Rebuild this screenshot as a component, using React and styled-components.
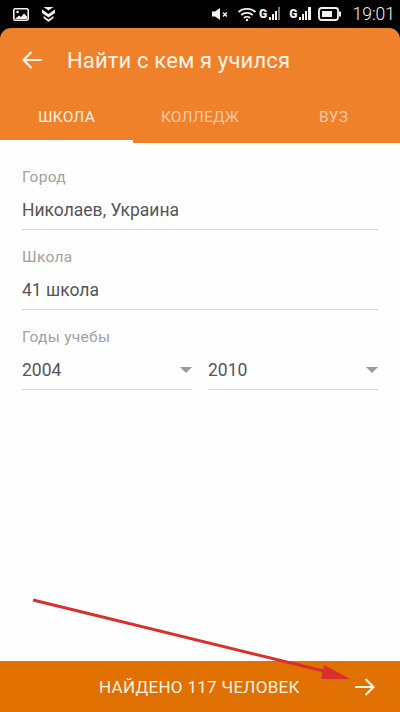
import React from "react";
import styled, { createGlobalStyle } from "styled-components";

const Global = createGlobalStyle`
  html, body { margin: 0; padding: 0; background: #000; }
  * { box-sizing: border-box; }
`;
const Screen = styled.div`
  position: relative; width: 400px; height: 712px; display: flex; flex-direction: column;
  background: #000; font-family: Roboto, "Noto Sans", sans-serif; overflow: hidden;
`;
const StatusBar = styled.div`
  height: 28px; flex: none; display: flex; align-items: center; padding: 0 5px 0 13px; color: #f2f2f2; background: #000;
`;
const StatusLeft = styled.div`display: flex; align-items: center; gap: 13px; flex: 1;`;
const StatusRight = styled.div`display: flex; align-items: center; gap: 2px;`;
const Clock = styled.span`font-size: 17.5px; font-weight: 300; margin-left: 9px; line-height: 28px;`;
const Signal = styled.span`display: inline-flex; align-items: flex-end; gap: 1px; height: 16px; margin-top: -3px; margin-left: ${p => p.$gap || 0}px;`;
const SignalG = styled.span`font-size: 12px; font-weight: 900; line-height: 13px; margin-right: 1px;`;
const Bar = styled.span`width: ${p => p.$w || 2}px; height: ${p => p.$h}px; background: ${p => p.$dim ? "#777" : "#f2f2f2"}; margin-bottom: 1px;`;
const Header = styled.header`
  flex: none; height: 115px; background: #f0812b; border-radius: 11px 11px 0 0; display: flex; flex-direction: column; color: #fff3e6;
`;
const TitleRow = styled.div`height: 66px; display: flex; align-items: center; padding: 0 0 2px 22px; gap: 25px;`;
const Title = styled.h1`margin: 0; font-size: 22px; font-weight: 400; letter-spacing: .15px; color: #fff3e6;`;
const Tabs = styled.div`display: grid; grid-template-columns: 133px 134px 133px; flex: 1;`;
const Tab = styled.div`
  display: flex; align-items: center; justify-content: center; font-size: 15.5px; letter-spacing: .2px;
  color: ${p => p.$active ? "#fff0df" : "#f9c9a0"};
  border-bottom: 3px solid ${p => p.$active ? "#ffffff" : "transparent"};
`;
const Form = styled.main`
  flex: 1; background: #fefefe; padding: 20px 22px 0; display: flex; flex-direction: column; gap: 13px;
`;
const Field = styled.div`display: flex; flex-direction: column;`;
const Label = styled.label`font-size: 15.5px; line-height: 28px; height: 28px; color: #a0a0a0; letter-spacing: .3px;`;
const Value = styled.div`
  position: relative; height: 39px; padding-top: 4px; font-size: 17.5px; line-height: 30px; color: #555;
  border-bottom: 1px solid #dcdcdc;
`;
const Row = styled.div`display: grid; grid-template-columns: 170px 170px; gap: 16px;`;
const Caret = styled.span`
  position: absolute; right: 0; top: 16px; width: 0; height: 0;
  border-left: 6px solid transparent; border-right: 6px solid transparent; border-top: 6px solid #9a9a9a;
`;
const Footer = styled.footer`
  flex: none; height: 51px; background: #e07000; display: flex; align-items: center; color: #fff3e6; padding: 0 25px 0 99px;
`;
const FooterText = styled.span`flex: 1; font-size: 17px; letter-spacing: .3px;`;
const Annotation = styled.svg`position: absolute; left: 0; top: 0; pointer-events: none;`;

const Arrow = ({ flip }) => (
  <svg width="20" height="18" viewBox="0 0 20 18" fill="none" stroke="#fff3e6" strokeWidth="2.2" style={flip ? { transform: "scaleX(-1)" } : undefined}>
    <path d="M0 9H18.500M10.500 1l8 8-8 8" />
  </svg>
);

export default function App() {
  return (
    <Screen>
      <Global />
      <StatusBar>
        <StatusLeft>
          <svg width="16" height="13" viewBox="0 0 16 13">
            <rect x=".8" y=".8" width="14.400" height="11.400" rx="1.500" fill="none" stroke="#f2f2f2" strokeWidth="1.600" />
            <circle cx="4.600" cy="4" r="1.300" fill="#f2f2f2" />
            <path d="M2 11l4-3.500 2 1.500 3-3.500 3 3V11z" fill="#f2f2f2" />
          </svg>
          <svg width="13" height="15" viewBox="0 0 13 15" fill="#f2f2f2">
            <path d="M1.500 0h10L6.500 3.500z" />
            <path d="M0 2.500L6.500 7 13 2.500V6L6.500 10.500 0 6z" />
            <path d="M1.500 9L6.500 12.500 11.500 9V11L6.500 15 1.500 11z" />
          </svg>
        </StatusLeft>
        <StatusRight>
          <svg width="18" height="14" viewBox="0 0 18 14" fill="#f2f2f2">
            <path d="M0 4.500h3L8 1v12L3 9.500H0z" />
            <path d="M11 5.500l4 4M15 5.500l-4 4" stroke="#f2f2f2" strokeWidth="1.500" />
          </svg>
          <svg width="20" height="15" viewBox="0 0 19 15" fill="none" stroke="#f2f2f2" strokeWidth="1.800" style={{ marginLeft: 5 }}>
            <path d="M1 5C5.500.7 13.500.7 18 5M3.800 8c3-2.800 8.400-2.800 11.400 0M6.500 11c1.600-1.400 4.400-1.400 6 0" />
            <circle cx="9.500" cy="13" r="1.200" fill="#f2f2f2" stroke="none" />
          </svg>
          <Signal>
            <SignalG>G</SignalG><Bar $h={3} /><Bar $h={6} /><Bar $h={9} /><Bar $h={13} $dim />
          </Signal>
          <Signal $gap={7}>
            <SignalG>G</SignalG><Bar $h={3} /><Bar $h={6} /><Bar $h={9} /><Bar $h={13} $w={3} />
          </Signal>
          <svg width="23" height="14" viewBox="0 0 23 14" style={{ marginLeft: 5 }}>
            <rect x="1" y="1" width="19" height="12" rx="2.500" fill="none" stroke="#f2f2f2" strokeWidth="1.800" />
            <rect x="4" y="4" width="10" height="6" fill="#f2f2f2" />
            <rect x="21" y="4.500" width="2" height="5" fill="#f2f2f2" />
          </svg>
          <Clock>19:01</Clock>
        </StatusRight>
      </StatusBar>
      <Header>
        <TitleRow>
          <Arrow flip />
          <Title>Найти с кем я учился</Title>
        </TitleRow>
        <Tabs>
          <Tab $active>ШКОЛА</Tab>
          <Tab>КОЛЛЕДЖ</Tab>
          <Tab>ВУЗ</Tab>
        </Tabs>
      </Header>
      <Form>
        <Field><Label>Город</Label><Value>Николаев, Украина</Value></Field>
        <Field><Label>Школа</Label><Value>41 школа</Value></Field>
        <Field>
          <Label>Годы учебы</Label>
          <Row>
            <Value>2004<Caret /></Value>
            <Value>2010<Caret /></Value>
          </Row>
        </Field>
      </Form>
      <Footer>
        <FooterText>НАЙДЕНО 117 ЧЕЛОВЕК</FooterText>
        <Arrow />
      </Footer>
      <Annotation width="400" height="712" viewBox="0 0 400 712">
        <path d="M33 600L328 672" stroke="#d92f2f" strokeWidth="3" />
        <path d="M324 665L350 679H321z" fill="#d92f2f" />
      </Annotation>
    </Screen>
  );
}
